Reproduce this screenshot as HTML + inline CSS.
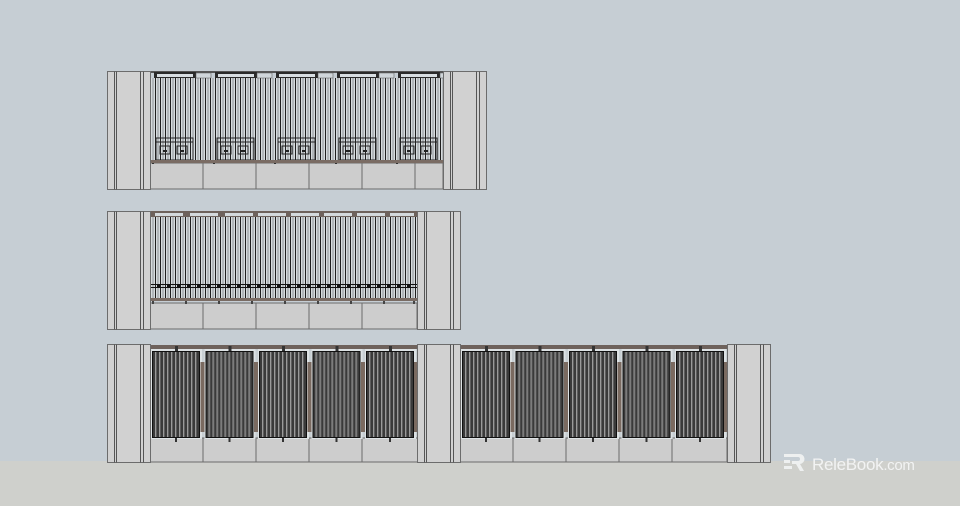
<!DOCTYPE html>
<html><head><meta charset="utf-8"><style>
html,body{margin:0;padding:0;width:960px;height:506px;overflow:hidden;background:#c6ced4}
.logo{position:absolute;left:812px;top:455px;font-family:"Liberation Sans",sans-serif;font-size:17px;color:#f2f3f3;letter-spacing:-0.3px}
.logo span{font-size:15px}
</style></head><body>
<svg width="960" height="506" style="position:absolute;left:0;top:0">
<defs>
<pattern id="bars" width="5" height="10" patternUnits="userSpaceOnUse">
<rect width="5" height="10" fill="#d6dbde"/><rect x="0" width="1" height="10" fill="#1e1e1e"/><rect x="2.5" width="1" height="10" fill="#8c9194"/>
</pattern>
<pattern id="grate" width="4" height="10" patternUnits="userSpaceOnUse">
<rect width="4" height="10" fill="#3a3a3a"/><rect x="1" width="1" height="10" fill="#9a9a9a"/><rect x="2" width="1" height="10" fill="#5e5e5e"/>
</pattern>
<g id="pillar">
<rect x="0" y="0" width="43" height="118" fill="#d1d1d1" stroke="#6c6c6c" stroke-width="1"/>
<line x1="7" y1="0" x2="7" y2="118" stroke="#555"/><line x1="9" y1="0" x2="9" y2="118" stroke="#555"/>
<line x1="33" y1="0" x2="33" y2="118" stroke="#555"/><line x1="36" y1="0" x2="36" y2="118" stroke="#555"/>
</g>
<g id="sec1">
<rect x="2" y="0" width="42" height="6" fill="#2a2a2a"/><rect x="5" y="2" width="36" height="3" fill="#d8dee2"/>
<rect x="44" y="1" width="15" height="5" fill="#d0d6da" stroke="#555" stroke-width=".5"/>
<rect x="4" y="66" width="37" height="22" fill="none" stroke="#222"/>
<line x1="4" y1="70" x2="41" y2="70" stroke="#222"/>
<rect x="8" y="74" width="10" height="8" fill="none" stroke="#222"/><rect x="25" y="74" width="10" height="8" fill="none" stroke="#222"/>
<rect x="11" y="78" width="4" height="2" fill="#222"/><rect x="28" y="78" width="4" height="2" fill="#222"/>
<rect x="0" y="88" width="2" height="4" fill="#333"/>
</g>
<g id="sec3">
<rect x="-3" y="17" width="6" height="70" fill="#7a6a60"/>
<rect x="1" y="4" width="51" height="90" fill="#dde2e4"/>
<rect x="2.5" y="6.5" width="47" height="86" fill="url(#grate)" stroke="#111" stroke-width="1"/>
<rect x="25" y="1" width="3" height="5" fill="#333"/><rect x="25" y="93" width="2" height="4" fill="#333"/>
</g>
</defs>
<rect x="0" y="461" width="960" height="45" fill="#cfd0cc"/>

<!-- Panel 1 -->
<rect x="150" y="163" width="293" height="26" fill="#cdcdcd" stroke="#6c6c6c"/>
<g stroke="#6c6c6c"><line x1="203" y1="163" x2="203" y2="189"/><line x1="256" y1="163" x2="256" y2="189"/><line x1="309" y1="163" x2="309" y2="189"/><line x1="362" y1="163" x2="362" y2="189"/><line x1="415" y1="163" x2="415" y2="189"/></g>
<rect x="150" y="78" width="293" height="83" fill="url(#bars)"/>
<rect x="150" y="71" width="293" height="2" fill="#555"/>
<use href="#sec1" x="152" y="72"/><use href="#sec1" x="213" y="72"/><use href="#sec1" x="274" y="72"/><use href="#sec1" x="335" y="72"/><use href="#sec1" x="396" y="72"/>
<rect x="150" y="160" width="293" height="3" fill="#7a6c64"/>
<use href="#pillar" x="107.5" y="71.5"/><use href="#pillar" x="443.5" y="71.5"/>

<!-- Panel 2 -->
<rect x="150" y="303" width="267" height="26" fill="#cdcdcd" stroke="#6c6c6c"/>
<g stroke="#6c6c6c"><line x1="203" y1="303" x2="203" y2="329"/><line x1="256" y1="303" x2="256" y2="329"/><line x1="309" y1="303" x2="309" y2="329"/><line x1="362" y1="303" x2="362" y2="329"/></g>
<rect x="150" y="217" width="267" height="82" fill="url(#bars)"/>
<rect x="150" y="211" width="267" height="6" fill="#6e625c"/>
<g fill="#d4dadd"><rect x="155" y="213" width="28" height="3"/><rect x="190" y="213" width="28" height="3"/><rect x="225" y="213" width="28" height="3"/><rect x="258" y="213" width="28" height="3"/><rect x="291" y="213" width="28" height="3"/><rect x="324" y="213" width="28" height="3"/><rect x="357" y="213" width="28" height="3"/><rect x="390" y="213" width="24" height="3"/></g>
<rect x="150" y="284" width="267" height="1" fill="#111"/><rect x="150" y="287" width="267" height="1" fill="#111"/>
<g fill="#111"><rect x="157" y="284" width="3" height="4"/><rect x="167" y="284" width="3" height="4"/><rect x="177" y="284" width="3" height="4"/><rect x="187" y="284" width="3" height="4"/><rect x="197" y="284" width="3" height="4"/><rect x="207" y="284" width="3" height="4"/><rect x="217" y="284" width="3" height="4"/><rect x="227" y="284" width="3" height="4"/><rect x="237" y="284" width="3" height="4"/><rect x="247" y="284" width="3" height="4"/><rect x="257" y="284" width="3" height="4"/><rect x="267" y="284" width="3" height="4"/><rect x="277" y="284" width="3" height="4"/><rect x="287" y="284" width="3" height="4"/><rect x="297" y="284" width="3" height="4"/><rect x="307" y="284" width="3" height="4"/><rect x="317" y="284" width="3" height="4"/><rect x="327" y="284" width="3" height="4"/><rect x="337" y="284" width="3" height="4"/><rect x="347" y="284" width="3" height="4"/><rect x="357" y="284" width="3" height="4"/><rect x="367" y="284" width="3" height="4"/><rect x="377" y="284" width="3" height="4"/><rect x="387" y="284" width="3" height="4"/><rect x="397" y="284" width="3" height="4"/><rect x="407" y="284" width="3" height="4"/></g>
<rect x="150" y="298" width="267" height="3" fill="#7a6c64"/>
<g fill="#444"><rect x="152" y="301" width="2" height="3"/><rect x="185" y="301" width="2" height="3"/><rect x="218" y="301" width="2" height="3"/><rect x="251" y="301" width="2" height="3"/><rect x="284" y="301" width="2" height="3"/><rect x="317" y="301" width="2" height="3"/><rect x="350" y="301" width="2" height="3"/><rect x="383" y="301" width="2" height="3"/><rect x="413" y="301" width="2" height="3"/></g>
<use href="#pillar" x="107.5" y="211.5"/><use href="#pillar" x="417.5" y="211.5"/>

<!-- Panel 3 -->
<rect x="150" y="345" width="577" height="117" fill="#c8cfd3"/>
<rect x="150" y="438" width="577" height="24" fill="#cdcdcd" stroke="#6c6c6c"/>
<g stroke="#6c6c6c"><line x1="203" y1="438" x2="203" y2="462"/><line x1="256" y1="438" x2="256" y2="462"/><line x1="309" y1="438" x2="309" y2="462"/><line x1="362" y1="438" x2="362" y2="462"/><line x1="513" y1="438" x2="513" y2="462"/><line x1="566" y1="438" x2="566" y2="462"/><line x1="619" y1="438" x2="619" y2="462"/><line x1="672" y1="438" x2="672" y2="462"/></g>
<rect x="150" y="345" width="267" height="4" fill="#6e625c"/><rect x="460" y="345" width="267" height="4" fill="#6e625c"/>
<use href="#sec3" x="150" y="345"/><use href="#sec3" x="203.5" y="345"/><use href="#sec3" x="257" y="345"/><use href="#sec3" x="310.5" y="345"/><use href="#sec3" x="364" y="345"/>
<use href="#sec3" x="460" y="345"/><use href="#sec3" x="513.5" y="345"/><use href="#sec3" x="567" y="345"/><use href="#sec3" x="620.5" y="345"/><use href="#sec3" x="674" y="345"/>
<rect x="414" y="362" width="3" height="70" fill="#7a6a60"/><rect x="724" y="362" width="3" height="70" fill="#7a6a60"/>
<use href="#pillar" x="107.5" y="344.5"/><use href="#pillar" x="417.5" y="344.5"/><use href="#pillar" x="727.5" y="344.5"/>

<g fill="#eef0f0"><rect x="784" y="454" width="8" height="3"/><rect x="784" y="460" width="6" height="3"/><rect x="784" y="466" width="8" height="3"/>
<path d="M792 454h7a5 5 0 0 1 1 10l4 7h-4l-4-7h-4v-3h6a2 2 0 0 0 0-4h-6z"/></g>
</svg>
<div class="logo"><span style="font-size:17px">ReleBook</span><span>.com</span></div>
</body></html>
